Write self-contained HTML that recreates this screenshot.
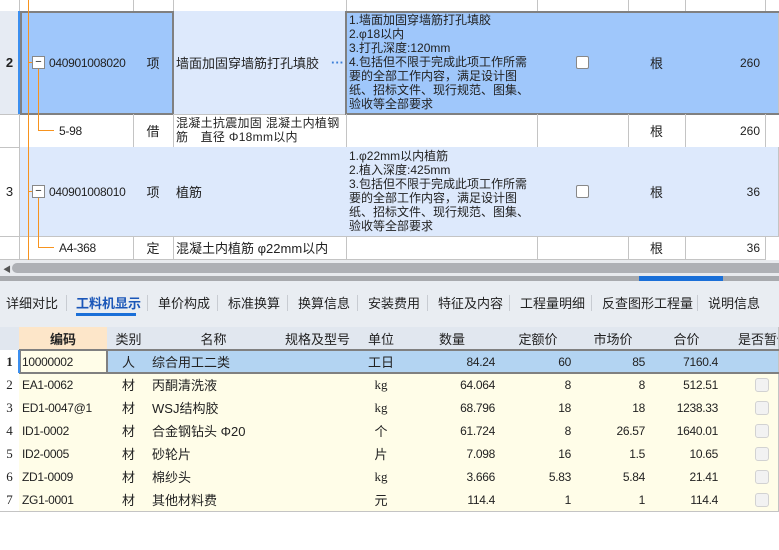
<!DOCTYPE html>
<html><head><meta charset="utf-8"><style>
*{margin:0;padding:0;box-sizing:border-box}
body{width:779px;height:550px;overflow:hidden;background:#fff;font-family:"Liberation Sans","Noto Sans CJK SC",sans-serif;font-size:13px;color:#222;position:relative}
.a{position:absolute}
.c{position:absolute;border-right:1px solid #c4c4c4;border-bottom:1px solid #c4c4c4;overflow:hidden;white-space:nowrap;display:flex;align-items:center}
.ctr{justify-content:center}.rt{justify-content:flex-end;padding-right:5px}
.f{font-size:12px;line-height:14px;white-space:normal;align-items:flex-start;padding:2px 3px}
.mono{font-family:"Liberation Sans","Noto Sans CJK SC",sans-serif;font-size:12px;letter-spacing:-0.3px}
.cb{width:13px;height:13px;border:1px solid #888;border-radius:2px;background:#fff}
.cb2{width:14px;height:14px;border:1px solid #d2d2d2;border-radius:3px;background:#f2f2f2}
.tab{position:absolute;top:293px;font-size:13px;color:#222}
.sep{position:absolute;top:295px;width:1px;height:16px;background:#c8ccd2}
</style></head><body>
<div class="c" style="left:0;top:0;width:20px;height:12px"></div>
<div class="c" style="left:20px;top:0;width:114px;height:12px"></div>
<div class="c ctr" style="left:133px;top:0;width:41px;height:12px"></div>
<div class="c" style="left:173px;top:0;width:174px;height:12px"></div>
<div class="c" style="left:346px;top:0;width:192px;height:12px"></div>
<div class="c" style="left:537px;top:0;width:92px;height:12px"></div>
<div class="c" style="left:628px;top:0;width:58px;height:12px"></div>
<div class="c" style="left:685px;top:0;width:81px;height:12px"></div>

<div class="c ctr" style="left:0;top:11px;width:20px;height:104px;background:#e6ebf3;font-weight:bold">2</div>
<div class="a" style="left:18px;top:11px;width:2px;height:103px;background:#3b8ff0"></div>
<div class="c mono" style="left:20px;top:11px;width:114px;height:104px;background:#9fc7fb;padding-left:29px">040901008020</div>
<div class="c ctr" style="left:133px;top:11px;width:41px;height:104px;background:#9fc7fb">项</div>
<div class="c" style="left:173px;top:11px;width:174px;height:104px;background:#dde9fc;padding-left:3px">墙面加固穿墙筋打孔填胶<span style="color:#3b7fd8;margin-left:12px;font-weight:bold">···</span></div>
<div class="c f" style="left:346px;top:11px;width:192px;height:104px;background:#9fc7fb">1.墙面加固穿墙筋打孔填胶<br>2.φ18以内<br>3.打孔深度:120mm<br>4.包括但不限于完成此项工作所需要的全部工作内容，满足设计图纸、招标文件、现行规范、图集、验收等全部要求</div>
<div class="c ctr" style="left:537px;top:11px;width:92px;height:104px;background:#9fc7fb"><div class="cb"></div></div>
<div class="c ctr" style="left:628px;top:11px;width:58px;height:104px;background:#9fc7fb">根</div>
<div class="c rt" style="left:685px;top:11px;width:81px;height:104px;background:#9fc7fb;font-size:12px">260</div>
<div class="c" style="left:765px;top:11px;width:14px;height:104px;background:#9fc7fb"></div>
<div class="a" style="left:20px;top:11px;width:154px;height:104px;border:2px solid #808080"></div>
<div class="a" style="left:345px;top:11px;width:434px;height:104px;border-top:2px solid #808080;border-bottom:2px solid #808080;border-left:2px solid #808080"></div>

<div class="c" style="left:0;top:114px;width:20px;height:34px"></div>
<div class="c mono" style="left:20px;top:114px;width:114px;height:34px;padding-left:39px">5-98</div>
<div class="c ctr" style="left:133px;top:114px;width:41px;height:34px">借</div>
<div class="c f" style="left:173px;top:114px;width:174px;height:34px;font-size:12px;line-height:14px;padding-top:2px;letter-spacing:0.3px">混凝土抗震加固 混凝土内植钢筋　直径 Φ18mm以内</div>
<div class="c" style="left:346px;top:114px;width:192px;height:34px"></div>
<div class="c" style="left:537px;top:114px;width:92px;height:34px"></div>
<div class="c ctr" style="left:628px;top:114px;width:58px;height:34px">根</div>
<div class="c rt" style="left:685px;top:114px;width:81px;height:34px;font-size:12px">260</div>

<div class="c ctr" style="left:0;top:147px;width:20px;height:90px">3</div>
<div class="c mono" style="left:20px;top:147px;width:114px;height:90px;background:#dde9fc;padding-left:29px">040901008010</div>
<div class="c ctr" style="left:133px;top:147px;width:41px;height:90px;background:#dde9fc">项</div>
<div class="c" style="left:173px;top:147px;width:174px;height:90px;background:#dde9fc;padding-left:3px">植筋</div>
<div class="c f" style="left:346px;top:147px;width:192px;height:90px;background:#dde9fc">1.φ22mm以内植筋<br>2.植入深度:425mm<br>3.包括但不限于完成此项工作所需要的全部工作内容，满足设计图纸、招标文件、现行规范、图集、验收等全部要求</div>
<div class="c ctr" style="left:537px;top:147px;width:92px;height:90px;background:#dde9fc"><div class="cb"></div></div>
<div class="c ctr" style="left:628px;top:147px;width:58px;height:90px;background:#dde9fc">根</div>
<div class="c rt" style="left:685px;top:147px;width:81px;height:90px;background:#dde9fc;font-size:12px">36</div>
<div class="c" style="left:765px;top:147px;width:14px;height:90px;background:#dde9fc"></div>

<div class="c" style="left:0;top:236px;width:20px;height:24px"></div>
<div class="c mono" style="left:20px;top:236px;width:114px;height:24px;padding-left:39px">A4-368</div>
<div class="c ctr" style="left:133px;top:236px;width:41px;height:24px">定</div>
<div class="c" style="left:173px;top:236px;width:174px;height:24px;padding-left:3px">混凝土内植筋 φ22mm以内</div>
<div class="c" style="left:346px;top:236px;width:192px;height:24px"></div>
<div class="c" style="left:537px;top:236px;width:92px;height:24px"></div>
<div class="c ctr" style="left:628px;top:236px;width:58px;height:24px">根</div>
<div class="c rt" style="left:685px;top:236px;width:81px;height:24px;font-size:12px">36</div>

<div class="a" style="left:28px;top:0;width:1px;height:260px;background:#f7931e"></div>
<div class="a" style="left:28px;top:62px;width:4px;height:1px;background:#f7931e"></div>
<div class="a" style="left:38px;top:68px;width:1px;height:63px;background:#f7931e"></div>
<div class="a" style="left:38px;top:130px;width:16px;height:1px;background:#f7931e"></div>
<div class="a" style="left:28px;top:191px;width:4px;height:1px;background:#f7931e"></div>
<div class="a" style="left:38px;top:197px;width:1px;height:51px;background:#f7931e"></div>
<div class="a" style="left:38px;top:247px;width:16px;height:1px;background:#f7931e"></div>
<div class="a" style="left:32px;top:56px;width:13px;height:13px;border:1px solid #888;background:#fff;font-size:11px;line-height:10px;text-align:center">−</div>
<div class="a" style="left:32px;top:185px;width:13px;height:13px;border:1px solid #888;background:#fff;font-size:11px;line-height:10px;text-align:center">−</div>

<div class="a" style="left:0;top:260px;width:779px;height:16px;background:#e8eaee"></div>
<div class="a" style="left:3px;top:264px;font-size:8px;color:#555">◀</div>
<div class="a" style="left:12px;top:263px;width:767px;height:10px;background:#aeb0b5;border-radius:5px 0 0 5px"></div>
<div class="a" style="left:0;top:276px;width:779px;height:5px;background:#a8aaae"></div>
<div class="a" style="left:639px;top:276px;width:84px;height:5px;background:#1a6fd8"></div>
<div class="a" style="left:0;top:281px;width:779px;height:46px;background:#e9edf2"></div>
<span class="tab" style="left:6px">详细对比</span><div class="sep" style="left:66px"></div>
<span class="tab" style="left:76px;color:#1a56b8;font-weight:bold">工料机显示</span>
<div class="a" style="left:76px;top:313px;width:60px;height:3px;background:#1a6fd8"></div>
<div class="sep" style="left:147px"></div>
<span class="tab" style="left:158px">单价构成</span><div class="sep" style="left:217px"></div>
<span class="tab" style="left:228px">标准换算</span><div class="sep" style="left:287px"></div>
<span class="tab" style="left:298px">换算信息</span><div class="sep" style="left:357px"></div>
<span class="tab" style="left:368px">安装费用</span><div class="sep" style="left:427px"></div>
<span class="tab" style="left:438px">特征及内容</span><div class="sep" style="left:509px"></div>
<span class="tab" style="left:520px">工程量明细</span><div class="sep" style="left:591px"></div>
<span class="tab" style="left:602px">反查图形工程量</span><div class="sep" style="left:697px"></div>
<span class="tab" style="left:708px">说明信息</span>

<div class="a" style="left:0;top:327px;width:779px;height:24px;background:#e1e7ef;border-bottom:1px solid #c4c4c4"></div>
<div class="c" style="left:0;top:327px;width:20px;height:24px;background:#e1e7ef"></div>
<div class="c ctr" style="left:19px;top:327px;width:89px;height:24px;background:#fde6c9;font-weight:bold;border-bottom:2px solid #3b8ff0">编码</div>
<div class="c ctr" style="left:107px;top:327px;width:44px;height:24px;background:#e1e7ef">类别</div>
<div class="c ctr" style="left:150px;top:327px;width:128px;height:24px;background:#e1e7ef">名称</div>
<div class="c ctr" style="left:277px;top:327px;width:82px;height:24px;background:#e1e7ef">规格及型号</div>
<div class="c ctr" style="left:358px;top:327px;width:47px;height:24px;background:#e1e7ef">单位</div>
<div class="c ctr" style="left:404px;top:327px;width:97px;height:24px;background:#e1e7ef">数量</div>
<div class="c ctr" style="left:500px;top:327px;width:77px;height:24px;background:#e1e7ef">定额价</div>
<div class="c ctr" style="left:576px;top:327px;width:75px;height:24px;background:#e1e7ef">市场价</div>
<div class="c ctr" style="left:650px;top:327px;width:74px;height:24px;background:#e1e7ef">合价</div>
<div class="c" style="left:723px;top:327px;width:56px;height:24px;background:#e1e7ef;padding-left:15px">是否暂估</div>

<div id="rows"></div>
<script>
var d=[["10000002","人","综合用工二类","工日","84.24","60","85","7160.4"],
["EA1-0062","材","丙酮清洗液","kg","64.064","8","8","512.51"],
["ED1-0047@1","材","WSJ结构胶","kg","68.796","18","18","1238.33"],
["ID1-0002","材","合金钢钻头 Φ20","个","61.724","8","26.57","1640.01"],
["ID2-0005","材","砂轮片","片","7.098","16","1.5","10.65"],
["ZD1-0009","材","棉纱头","kg","3.666","5.83","5.84","21.41"],
["ZG1-0001","材","其他材料费","元","114.4","1","1","114.4"]];
var h="";
d.forEach(function(r,i){
var t=350+i*23,sel=i==0,bg=sel?"#b3d4f2":"#fffde8";
var s='top:'+t+'px;height:24px;';
h+='<div class="c ctr" style="left:0;'+s+'width:20px;background:#fff;font-family:Liberation Serif,serif;'+(sel?'font-weight:bold':'')+'">'+(i+1)+'</div>';
h+='<div class="c mono" style="left:19px;'+s+'width:89px;background:'+(sel?'#fffde8':bg)+';padding-left:3px">'+r[0]+'</div>';
h+='<div class="c ctr" style="left:107px;'+s+'width:44px;background:'+bg+'">'+r[1]+'</div>';
h+='<div class="c" style="left:150px;'+s+'width:128px;background:'+bg+';padding-left:2px">'+r[2]+'</div>';
h+='<div class="c" style="left:277px;'+s+'width:82px;background:'+bg+'"></div>';
h+='<div class="c ctr" style="left:358px;'+s+'width:47px;background:'+bg+';font-family:Liberation Serif,Noto Sans CJK SC,serif">'+r[3]+'</div>';
h+='<div class="c rt mono" style="left:404px;'+s+'width:97px;background:'+bg+'">'+r[4]+'</div>';
h+='<div class="c rt mono" style="left:500px;'+s+'width:77px;background:'+bg+'">'+r[5]+'</div>';
h+='<div class="c rt mono" style="left:576px;'+s+'width:75px;background:'+bg+'">'+r[6]+'</div>';
h+='<div class="c rt mono" style="left:650px;'+s+'width:74px;background:'+bg+'">'+r[7]+'</div>';
h+='<div class="c" style="left:723px;'+s+'width:56px;background:'+bg+';padding-left:32px">'+(sel?'':'<div class="cb2"></div>')+'</div>';
});
h+='<div class="a" style="left:19px;top:349px;width:89px;height:25px;border:2px solid #808080"></div>';
h+='<div class="a" style="left:107px;top:349px;width:672px;height:25px;border-top:2px solid #808080;border-bottom:2px solid #808080"></div>';
h+='<div class="a" style="left:18px;top:350px;width:2px;height:23px;background:#3b8ff0"></div>';
document.getElementById("rows").innerHTML=h;
</script>
</body></html>
